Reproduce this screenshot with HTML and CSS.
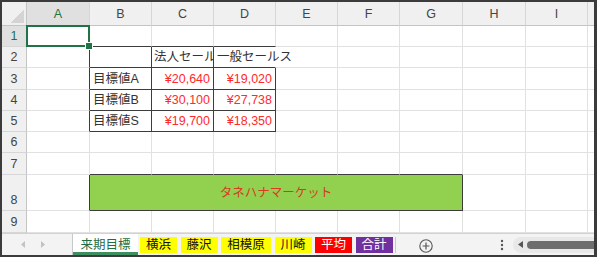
FILE: index.html
```html
<!DOCTYPE html>
<html>
  <head>
  <meta charset="utf-8">
  <title>来期目標</title>
  <link rel="stylesheet" href="styles.css">
  </head>
  <body>

    <div class="window">

      <div class="sheet">
        <!-- column headers -->
        <div class="hd corner"><span class="corner-mark"></span></div>
        <div class="hd ch sel">A</div>
        <div class="hd ch">B</div>
        <div class="hd ch">C</div>
        <div class="hd ch">D</div>
        <div class="hd ch">E</div>
        <div class="hd ch">F</div>
        <div class="hd ch">G</div>
        <div class="hd ch">H</div>
        <div class="hd ch">I</div>
        <div class="hd ch end"></div>

        <!-- row 1 -->
        <div class="hd rh sel">1</div>
        <div class="c active"></div>
        <div class="c bb"></div>
        <div class="c bb"></div>
        <div class="c bb"></div>
        <div class="c"></div><div class="c"></div><div class="c"></div><div class="c"></div><div class="c"></div>
        <div class="c end"></div>

        <!-- row 2 -->
        <div class="hd rh">2</div>
        <div class="c br"></div>
        <div class="c br bb"></div>
        <div class="c br bb clip">法人セールス</div>
        <div class="c bb nr">一般セールス</div>
        <div class="c"></div><div class="c"></div><div class="c"></div><div class="c"></div><div class="c"></div>
        <div class="c end"></div>

        <!-- row 3 -->
        <div class="hd rh">3</div>
        <div class="c br"></div>
        <div class="c br bb">目標値A</div>
        <div class="c br bb num">¥20,640</div>
        <div class="c br bb num">¥19,020</div>
        <div class="c"></div><div class="c"></div><div class="c"></div><div class="c"></div><div class="c"></div>
        <div class="c end"></div>

        <!-- row 4 -->
        <div class="hd rh">4</div>
        <div class="c br"></div>
        <div class="c br bb">目標値B</div>
        <div class="c br bb num">¥30,100</div>
        <div class="c br bb num">¥27,738</div>
        <div class="c"></div><div class="c"></div><div class="c"></div><div class="c"></div><div class="c"></div>
        <div class="c end"></div>

        <!-- row 5 -->
        <div class="hd rh">5</div>
        <div class="c br"></div>
        <div class="c br bb">目標値S</div>
        <div class="c br bb num">¥19,700</div>
        <div class="c br bb num">¥18,350</div>
        <div class="c"></div><div class="c"></div><div class="c"></div><div class="c"></div><div class="c"></div>
        <div class="c end"></div>

        <!-- row 6 -->
        <div class="hd rh">6</div>
        <div class="c"></div><div class="c"></div><div class="c"></div><div class="c"></div><div class="c"></div>
        <div class="c"></div><div class="c"></div><div class="c"></div><div class="c"></div>
        <div class="c end"></div>

        <!-- row 7 -->
        <div class="hd rh">7</div>
        <div class="c"></div>
        <div class="c bb"></div><div class="c bb"></div><div class="c bb"></div>
        <div class="c bb"></div><div class="c bb"></div><div class="c bb"></div>
        <div class="c"></div><div class="c"></div>
        <div class="c end"></div>

        <!-- row 8 -->
        <div class="hd rh">8</div>
        <div class="c br"></div>
        <div class="c banner">タネハナマーケット</div>
        <div class="c"></div><div class="c"></div>
        <div class="c end"></div>

        <!-- row 9 -->
        <div class="hd rh">9</div>
        <div class="c"></div><div class="c"></div><div class="c"></div><div class="c"></div><div class="c"></div>
        <div class="c"></div><div class="c"></div><div class="c"></div><div class="c"></div>
        <div class="c end"></div>
      </div>

      <div class="tabbar">
        <div class="tab-nav">
          <svg width="4" height="7" viewBox="0 0 4 7"><path d="M4 0V7L0 3.5Z"/></svg>
          <svg width="4" height="7" viewBox="0 0 4 7"><path d="M0 0V7L4 3.5Z"/></svg>
        </div>
        <div class="tab-active">来期目標</div>
        <div class="tabs">
          <span class="tab yellow">横浜</span>
          <span class="tab yellow">藤沢</span>
          <span class="tab yellow">相模原</span>
          <span class="tab yellow">川崎</span>
          <span class="tab red">平均</span>
          <span class="tab purple">合計</span>
        </div>
        <span class="tab-sep"></span>
        <svg class="add-sheet" width="14" height="14" viewBox="0 0 14 14">
          <circle cx="7" cy="7" r="6.2" fill="none" stroke="#555" stroke-width="1.1"/>
          <path d="M7 3.6V10.4M3.6 7H10.4" stroke="#555" stroke-width="1.2"/>
        </svg>
        <svg class="more" width="4" height="12" viewBox="0 0 4 12">
          <circle cx="2" cy="2" r="1.2"/><circle cx="2" cy="6" r="1.2"/><circle cx="2" cy="10" r="1.2"/>
        </svg>
        <div class="hscroll">
          <svg width="5" height="7" viewBox="0 0 5 7"><path d="M5 0V7L0 3.5Z"/></svg>
          <span class="thumb"></span>
        </div>
      </div>

    </div>

  </body>
</html>
```

FILE: styles.css
```css
*
{
  box-sizing: border-box;
}

body
{
  margin: 0;
  font-family: "Liberation Sans", "Noto Sans CJK JP", sans-serif;
  font-size: 12.5px;
  color: #333;
}

div.window
{
  width: 597px;
  height: 257px;
  border: 2px solid #3b3b3b;
  border-right-width: 3px;
  background: #fff;
  display: flex;
  flex-direction: column;
  overflow: hidden;
}

/* Grid of cells */
div.sheet
{
  display: grid;
  grid-template-columns: 25px 63px 62px 62px 62px 62px 62px 63px 63px 62px 1fr;
  grid-template-rows: 24px 21px 21px 22px 21px 21px 21px 22px 36px 22px;
}

.hd
{
  display: flex;
  justify-content: center;
  background-color: #f0f0f0;
  color: #444;
  border-right: 1px solid #d6d6d6;
  border-bottom: 1px solid #d6d6d6;
}
.hd.ch
{
  align-items: center;
  border-bottom-color: #c4c4c4;
}
.hd.rh
{
  align-items: flex-end;
  line-height: 18px;
  padding-bottom: 1px;
  border-right-color: #c4c4c4;
}
.hd.sel
{
  background-color: #e0e0e0;
  color: #217346;
}
.hd.corner
{
  justify-content: flex-end;
  align-items: flex-end;
  padding: 0 2px 2px 0;
  border-bottom-color: #c4c4c4;
  border-right-color: #c4c4c4;
}
span.corner-mark
{
  width: 14px;
  height: 14px;
  background: linear-gradient(to bottom right, transparent 50%, #d4d4d4 50%);
}
.hd.end
{
  border-right: none;
}

.c
{
  display: flex;
  align-items: flex-end;
  min-width: 0;
  padding: 0 3px 1px 3px;
  line-height: 18px;
  white-space: nowrap;
  border-right: 1px solid #e1e1e1;
  border-bottom: 1px solid #e1e1e1;
}
.c.end
{
  border-right: none;
}
.c.bb
{
  border-bottom-color: #3c3c3c;
}
.c.br
{
  border-right-color: #3c3c3c;
}
.c.nr
{
  border-right-color: transparent;
}
.c.clip
{
  overflow: hidden;
  padding-left: 2px;
}
.c.num
{
  justify-content: flex-end;
  color: #ff2a2a;
}
.c.banner
{
  grid-column: span 6;
  justify-content: center;
  align-items: center;
  padding: 0;
  background-color: #92d050;
  color: #d83b20;
  border-right-color: #3c3c3c;
  border-bottom-color: #3c3c3c;
}

/* Selected cell A1 */
.c.active
{
  position: relative;
}
.c.active:after
{
  content: "";
  position: absolute;
  top: -1px;
  left: -1px;
  right: -1px;
  bottom: -1px;
  border: 2px solid #217346;
}
.c.active:before
{
  content: "";
  position: absolute;
  right: -4px;
  bottom: -4px;
  width: 6px;
  height: 6px;
  background-color: #217346;
  border: 1px solid #fff;
  z-index: 1;
}

/* Sheet tabs */
div.tabbar
{
  flex: 1;
  display: flex;
  align-items: center;
  background-color: #f3f3f3;
  border-top: 1px solid #d2d2d2;
}
div.tab-nav
{
  display: flex;
  align-items: center;
  gap: 16px;
  width: 70px;
  height: 100%;
  padding-left: 19px;
  fill: #c2c2c2;
}
div.tab-active
{
  width: 66px;
  height: 100%;
  display: flex;
  justify-content: center;
  align-items: center;
  padding-bottom: 2px;
  background-color: #fff;
  border-left: 1px solid #c8c8c8;
  color: #1f6e43;
  box-shadow: inset 0 -3px 0 #3d8f5f;
}
div.tabs
{
  display: flex;
  gap: 3.5px;
  margin-left: 2px;
  height: 16px;
}
span.tab
{
  width: 37px;
  line-height: 16px;
  text-align: center;
  color: #111;
}
span.tab:nth-child(3)
{
  width: 50px;
}
span.tab.yellow
{
  background-color: #ffff00;
}
span.tab.red
{
  background-color: #ff0000;
  color: #fff;
}
span.tab.purple
{
  background-color: #7030a0;
  color: #fff;
}
span.tab-sep
{
  width: 1px;
  height: 16px;
  margin-left: 2px;
  background-color: #c8c8c8;
}
svg.add-sheet
{
  margin-left: 23px;
  margin-top: 2px;
}
svg.more
{
  margin-left: 67px;
  margin-top: 1px;
  fill: #555;
}
div.hscroll
{
  flex: 1;
  display: flex;
  align-items: center;
  gap: 4px;
  height: 16px;
  margin-left: 9px;
  padding-left: 5px;
  background-color: #e8e8e8;
  border-radius: 8px 0 0 8px;
  fill: #555;
}
span.thumb
{
  flex: 1;
  height: 8px;
  background-color: #6e6e6e;
  border-radius: 4px 0 0 4px;
}
```
